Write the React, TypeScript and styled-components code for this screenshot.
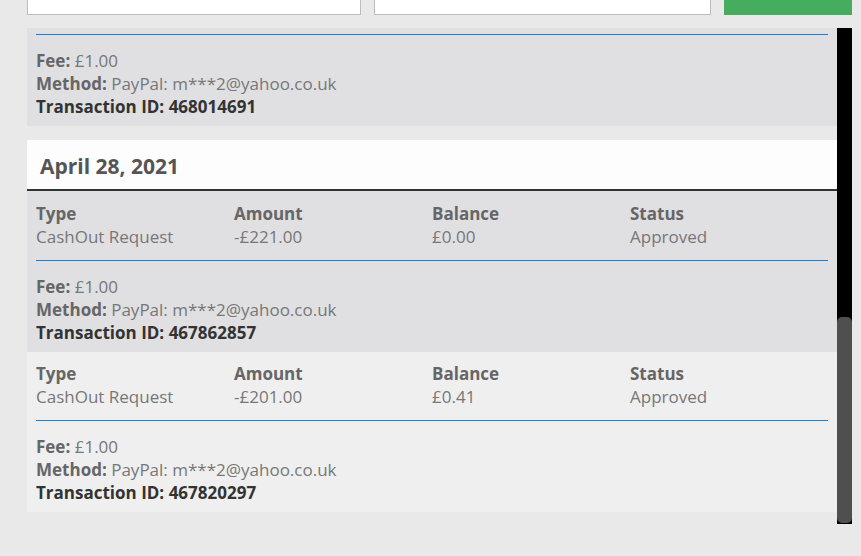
import styled, { createGlobalStyle } from 'styled-components'

const GlobalStyle = createGlobalStyle`
  html, body {
    margin: 0;
    padding: 0;
    background: #e9e9e9;
    font-family: 'Open Sans', 'Liberation Sans', sans-serif;
    overflow: hidden;
  }
`

interface ITransaction {
  type: string;
  amount: string;
  balance: string;
  status: string;
  fee: string;
  method: string;
  id: string;
}

const transactions: ITransaction[] = [
  { type: 'CashOut Request', amount: '-£221.00', balance: '£0.00', status: 'Approved', fee: '£1.00', method: 'PayPal: m***2@yahoo.co.uk', id: '467862857' },
  { type: 'CashOut Request', amount: '-£201.00', balance: '£0.41', status: 'Approved', fee: '£1.00', method: 'PayPal: m***2@yahoo.co.uk', id: '467820297' },
]

const Details = ({ tx }: { tx: Pick<ITransaction, 'fee' | 'method' | 'id'> }): JSX.Element => (
  <DetailList>
    <div><Label>Fee:</Label> {tx.fee}</div>
    <div><Label>Method:</Label> {tx.method}</div>
    <TxId>Transaction ID: {tx.id}</TxId>
  </DetailList>
)

const TransactionRow = ({ tx, shade }: { tx: ITransaction; shade: 'dark' | 'light' }): JSX.Element => (
  <Row $shade={shade}>
    <Columns>
      <Cell><Label>Type</Label><span>{tx.type}</span></Cell>
      <Cell><Label>Amount</Label><span>{tx.amount}</span></Cell>
      <Cell><Label>Balance</Label><span>{tx.balance}</span></Cell>
      <Cell><Label>Status</Label><span>{tx.status}</span></Cell>
    </Columns>
    <Divider />
    <Details tx={tx} />
  </Row>
)

export default function App(): JSX.Element {
  return (<Page>
    <GlobalStyle />
    <Filters>
      <Input $width={334} />
      <Input $width={337} />
      <SearchButton />
    </Filters>
    <ScrollArea>
      <List>
        <CutRow>
          <Divider />
          <Details tx={{ fee: '£1.00', method: 'PayPal: m***2@yahoo.co.uk', id: '468014691' }} />
        </CutRow>
        <DayGroup>
          <DayHeader>April 28, 2021</DayHeader>
          {transactions.map((tx, i) => (
            <TransactionRow key={tx.id} tx={tx} shade={i % 2 === 0 ? 'dark' : 'light'} />
          ))}
        </DayGroup>
      </List>
      <Track>
        <Thumb />
      </Track>
    </ScrollArea>
  </Page>)
}

const Page = styled.div`
  width: 861px;
  height: 556px;
  display: flex;
  flex-direction: column;
`

const Filters = styled.div`
  display: flex;
  height: 15px;
  margin-left: 27px;
  gap: 13px;
`

const Input = styled.div<{ $width: number }>`
  box-sizing: border-box;
  width: ${p => p.$width}px;
  height: 15px;
  background: #fff;
  border: 1px solid #bdbdbd;
  border-top: none;
`

const SearchButton = styled.div`
  width: 128px;
  height: 15px;
  background: #46ad5e;
`

const ScrollArea = styled.div`
  display: flex;
  margin: 13px 0 0 27px;
  height: 496px;
`

const List = styled.div`
  width: 810px;
  display: flex;
  flex-direction: column;
`

const CutRow = styled.div`
  background: #e0dfe2;
  padding: 6px 9px 8px;
`

const DayGroup = styled.div`
  margin-top: 14px;
`

const DayHeader = styled.div`
  height: 47px;
  display: flex;
  align-items: center;
  padding: 2px 0 0 13px;
  background: #fdfdfd;
  border-bottom: 2px solid #333;
  color: #555;
  font-size: 21px;
  font-weight: 700;
`

const Row = styled.div<{ $shade: 'dark' | 'light' }>`
  background: ${p => p.$shade === 'dark' ? '#e0dfe2' : '#efefef'};
  padding: ${p => p.$shade === 'dark' ? '11px' : '10px'} 9px 8px;
`

const Columns = styled.div`
  display: grid;
  grid-template-columns: repeat(4, 198px);
`

const Cell = styled.div`
  display: flex;
  flex-direction: column;
  font-size: 17px;
  line-height: 23px;
  color: #777;
`

const Label = styled.span`
  font-weight: 700;
  color: #666;
`

const Divider = styled.div`
  height: 1px;
  background: #1a7fd6;
  margin: 12px 0 14px;

  ${CutRow} > & {
    margin-top: 0;
  }
`

const DetailList = styled.div`
  font-size: 17px;
  line-height: 23px;
  color: #777;
`

const TxId = styled.div`
  font-weight: 700;
  color: #333;
`

const Track = styled.div`
  width: 15px;
  background: #000;
  display: flex;
  flex-direction: column;
  justify-content: flex-end;
`

const Thumb = styled.div`
  height: 206px;
  margin-bottom: 1px;
  background: #4f4f4f;
  border-radius: 5px;
`
